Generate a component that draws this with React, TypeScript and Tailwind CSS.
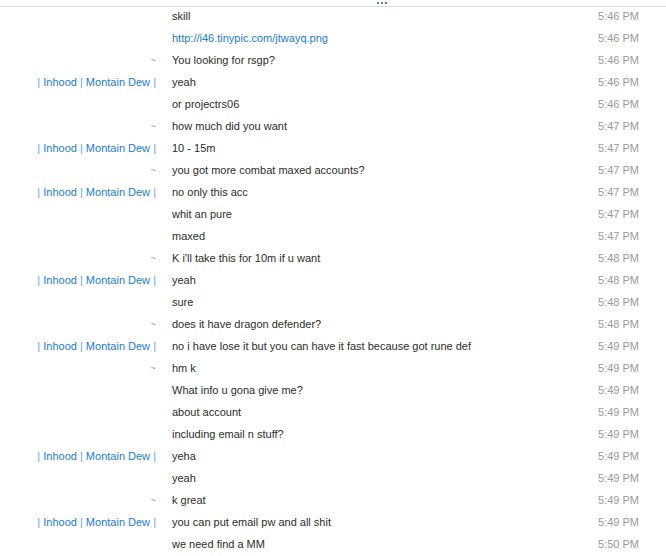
import React from 'react';

type Msg = { who?: 'me' | 'them'; text: string; time: string; link?: boolean };

const messages: Msg[] = [
    { text: 'skill', time: '5:46 PM' },
    { text: 'http://i46.tinypic.com/jtwayq.png', time: '5:46 PM', link: true },
    { who: 'me', text: 'You looking for rsgp?', time: '5:46 PM' },
    { who: 'them', text: 'yeah', time: '5:46 PM' },
    { text: 'or projectrs06', time: '5:46 PM' },
    { who: 'me', text: 'how much did you want', time: '5:47 PM' },
    { who: 'them', text: '10 - 15m', time: '5:47 PM' },
    { who: 'me', text: 'you got more combat maxed accounts?', time: '5:47 PM' },
    { who: 'them', text: 'no only this acc', time: '5:47 PM' },
    { text: 'whit an pure', time: '5:47 PM' },
    { text: 'maxed', time: '5:47 PM' },
    { who: 'me', text: "K i'll take this for 10m if u want", time: '5:48 PM' },
    { who: 'them', text: 'yeah', time: '5:48 PM' },
    { text: 'sure', time: '5:48 PM' },
    { who: 'me', text: 'does it have dragon defender?', time: '5:48 PM' },
    { who: 'them', text: 'no i have lose it but you can have it fast because got rune def', time: '5:49 PM' },
    { who: 'me', text: 'hm k', time: '5:49 PM' },
    { text: 'What info u gona give me?', time: '5:49 PM' },
    { text: 'about account', time: '5:49 PM' },
    { text: 'including email n stuff?', time: '5:49 PM' },
    { who: 'them', text: 'yeha', time: '5:49 PM' },
    { text: 'yeah', time: '5:49 PM' },
    { who: 'me', text: 'k great', time: '5:49 PM' },
    { who: 'them', text: 'you can put email pw and all shit', time: '5:49 PM' },
    { text: 'we need find a MM', time: '5:50 PM' },
];

function Sender({ who }: { who?: 'me' | 'them' }) {
    if (who === 'me') return <span className="text-[#a8a8a8] text-[10px]">~</span>;
    if (who === 'them')
        return (
            <span className="text-[#1c7cd5]">
                <span className="text-[#5aa6e6]">|</span> Inhood <span className="text-[#5aa6e6]">|</span> Montain Dew{' '}
                <span className="text-[#5aa6e6]">|</span>
            </span>
        );
    return null;
}

export default function App() {
    return (
        <div
            className="w-[666px] h-[556px] overflow-hidden bg-white text-[11px] text-[#2d2d2d]"
            style={{ fontFamily: '"Liberation Sans", Arial, sans-serif' }}
        >
            {/* Top bar */}
            <div className="relative h-[7px] border-b border-[#dcdcdc]">
                <div className="absolute left-[377px] top-[2px] flex gap-[2px]">
                    <span className="w-[2px] h-[2px] bg-[#5b7ea8]" />
                    <span className="w-[2px] h-[2px] bg-[#5b7ea8]" />
                    <span className="w-[2px] h-[2px] bg-[#5b7ea8]" />
                </div>
            </div>

            {/* Messages */}
            <div className="flex flex-col">
                {messages.map((m, i) => (
                    <div key={i} className="flex h-[22px] leading-[18px] whitespace-nowrap">
                        <div className="w-[156px] text-right">
                            <Sender who={m.who} />
                        </div>
                        <div className="ml-4 flex-1">
                            {m.link ? <span className="text-[#1c7cd5]">{m.text}</span> : m.text}
                        </div>
                        <div className="pr-[27px] text-[#9a9a9a]">{m.time}</div>
                    </div>
                ))}
            </div>
        </div>
    );
}
